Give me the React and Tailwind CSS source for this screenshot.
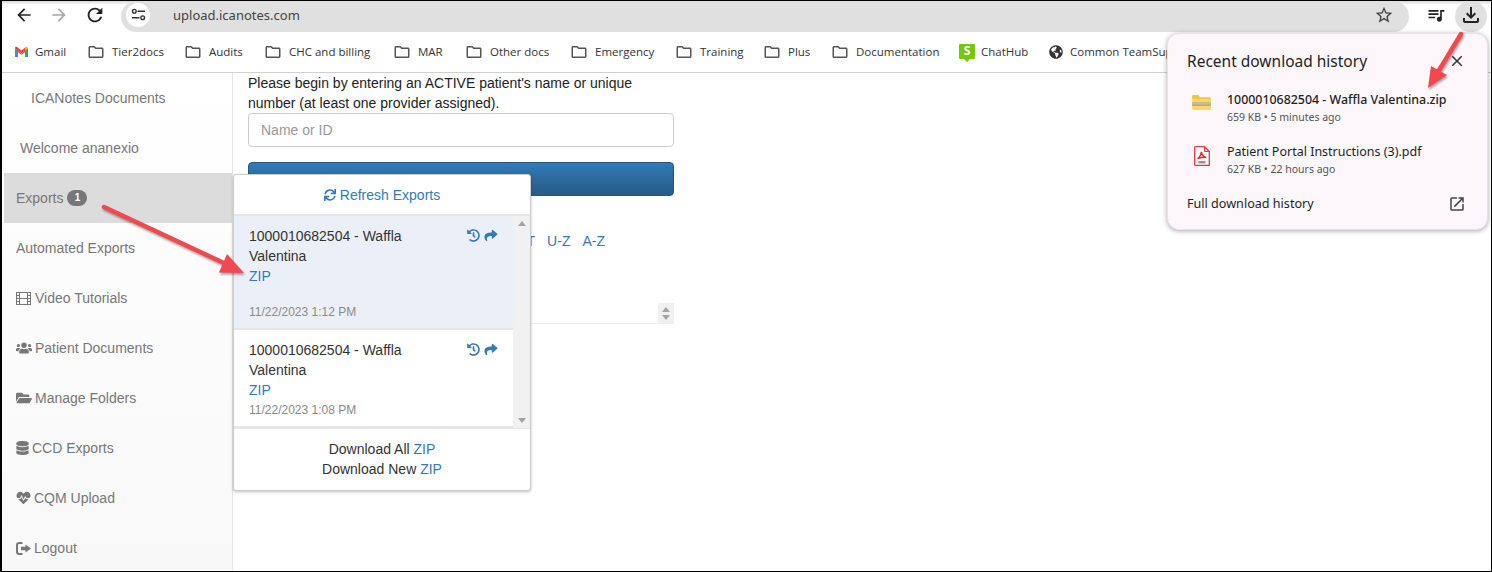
import { FaUsers, FaFolderOpen, FaDatabase, FaHeartbeat, FaHistory, FaShare, FaSync, FaGlobeAmericas } from 'react-icons/fa';
import {
  MdArrowBack,
  MdArrowForward,
  MdRefresh,
  MdStarBorder,
  MdOutlineQueueMusic,
  MdOutlineFileDownload,
  MdOutlineFolder,
  MdClose,
  MdOpenInNew,
} from 'react-icons/md';

const folders = [
  { label: 'Tier2docs', width: 'w-[51px]' },
  { label: 'Audits', width: 'w-[34px]' },
  { label: 'CHC and billing', width: 'w-[83px]' },
  { label: 'MAR', width: 'w-[26px]' },
  { label: 'Other docs', width: 'w-[59px]' },
  { label: 'Emergency', width: 'w-[59px]' },
  { label: 'Training', width: 'w-[42px]' },
  { label: 'Plus', width: 'w-[22px]' },
  { label: 'Documentation', width: 'w-[82px]' },
];

const FilmIcon = ({ className }) => (
  <svg viewBox="0 0 15 13" fill="none" stroke="currentColor" strokeWidth="1" className={className}>
    <rect x=".5" y=".5" width="14" height="12" />
    <path d="M3.500.5v12M11.500.5v12M3.500 6.500h8M.5 3.500h3M.5 6.500h3M.5 9.500h3M11.500 3.500h3M11.500 6.500h3M11.500 9.500h3" />
  </svg>
);

const LogoutIcon = ({ className }) => (
  <svg viewBox="0 0 15 13" fill="currentColor" className={className}>
    <path d="M3 0h3.500v2H3.200C2.500 2 2 2.500 2 3.200v6.600C2 10.500 2.500 11 3.200 11h3.300v2H3c-1.700 0-3-1.300-3-3V3c0-1.700 1.300-3 3-3z" />
    <path d="M9.500 2.500L15 6.500l-5.500 4V8.200H5V4.800h4.500z" />
  </svg>
);

const navItems = [
  { label: 'Automated Exports' },
  { label: 'Video Tutorials', icon: FilmIcon, gap: 'gap-[4px]', size: 'w-[15px] h-[13px]' },
  { label: 'Patient Documents', icon: FaUsers, gap: 'gap-[3px]', size: 'w-[16px] h-[16px]' },
  { label: 'Manage Folders', icon: FaFolderOpen, gap: 'gap-[3px]', size: 'w-[16px] h-[16px]' },
  { label: 'CCD Exports', icon: FaDatabase, gap: 'gap-[3px]', size: 'w-[13px] h-[14px]' },
  { label: 'CQM Upload', icon: FaHeartbeat, gap: 'gap-[3px]', size: 'w-[15px] h-[14px]' },
  { label: 'Logout', icon: LogoutIcon, gap: 'gap-[3px]', size: 'w-[15px] h-[13px]' },
];

const SiteInfoIcon = () => (
  <svg viewBox="0 0 16 14" fill="none" stroke="#333" strokeWidth="1.500" className="w-[15px] h-[13px]">
    <circle cx="3.500" cy="3.500" r="2" />
    <path d="M7 3.500h8M1 10.500h8" />
    <circle cx="12.500" cy="10.500" r="2" />
  </svg>
);

const GmailIcon = () => (
  <svg viewBox="0 0 16 13" className="w-[15px] h-[12px] shrink-0">
    <path d="M1 12V2.500L8 8l7-5.500V12h-3V6.500L8 9.600 4 6.500V12z" fill="#ea4335" />
    <path d="M1 12V2.500L4 5v7z" fill="#4285f4" />
    <path d="M12 12V5l3-2.500V12z" fill="#34a853" />
    <path d="M12 5l3-2.500c0-1.500-1.500-2-2.500-1.200L12 1.700z" fill="#fbbc04" />
    <path d="M4 5L1 2.500C1 1 2.500.5 3.500 1.300L8 4.800l4-3.100V5L8 8z" fill="#ea4335" />
  </svg>
);

const ChatHubIcon = () => (
  <span className="relative flex items-center justify-center w-[16px] h-[15px] shrink-0 rounded-[1px] bg-[#76c80e] text-white text-[12px] leading-none font-bold mb-[2px]">
    S
    <span className="absolute -bottom-[3px] left-[5px] w-0 h-0 border-l-[3px] border-r-[3px] border-t-[3px] border-l-transparent border-r-transparent border-t-[#76c80e]" />
  </span>
);

const ZipIcon = () => (
  <svg viewBox="0 0 20 16" className="w-[19px] h-[15px]">
    <path d="M0 1.500C0 .7.600 0 1.400 0h5l2 2.500h10.200c.8 0 1.400.6 1.400 1.400V5H0z" fill="#f5c13c" />
    <path d="M0 4h20v10.500c0 .8-.6 1.500-1.400 1.500H1.400C.6 16 0 15.300 0 14.500z" fill="#fcd765" />
    <rect x="0" y="8" width="20" height="3.500" fill="#a3a08c" />
    <rect x="0" y="9" width="20" height="1" fill="#d8d4bd" />
  </svg>
);

const PdfIcon = () => (
  <svg viewBox="0 0 16 20" className="w-[16px] h-[20px]">
    <path d="M1.500.7h9l4.800 4.800v13.800H1.500c-.5 0-.8-.3-.8-.8V1.500c0-.5.300-.8.800-.8z" fill="#fff" stroke="#e5383b" strokeWidth="1.300" />
    <path d="M10.500.7v4.800h4.800" fill="none" stroke="#e5383b" strokeWidth="1" />
    <path d="M3.600 12.600c2-1.200 3.400-3.800 3.800-6.800.5 2.800 2.200 5 4.900 5.600-2.800-.2-6 .4-8.700 1.200z" fill="none" stroke="#e02b2f" strokeWidth="1.500" />
    <rect x="4.500" y="15" width="7" height="2.500" fill="#b98a8a" />
  </svg>
);

const ScrollArrow = ({ up }) => (
  <svg viewBox="0 0 8 5" className="w-[8px] h-[5px]">
    <path d={up ? 'M4 0l4 5H0z' : 'M0 0h8L4 5z'} fill="#a3a3a3" />
  </svg>
);

const ExportRow = ({ date, active, tall }) => (
  <div className={`relative pl-[15px] pr-[14px] pt-[10px] border-b-2 border-[#e6e6e6] ${active ? 'bg-[#ebf0f8]' : 'bg-white'} ${tall ? 'h-[114px]' : 'h-[98px]'}`}>
    <div className="flex items-start justify-between">
      <div className="w-[170px] text-[#333]">1000010682504 - Waffla Valentina</div>
      <div className="flex items-center gap-[4px] pt-[3px] pr-[1px] text-[#337ab7]">
        <FaHistory className="w-[13px] h-[13px]" />
        <FaShare className="w-[14px] h-[13px]" />
      </div>
    </div>
    <div className="text-[#337ab7]">ZIP</div>
    <div className={`text-[12px] leading-[18px] text-[#8a8a8a] ${tall ? 'mt-[17px]' : 'mt-[1px]'}`}>{date}</div>
  </div>
);

export default function App() {
  return (
    <div className="relative h-[572px] overflow-hidden border border-black border-l-2 bg-white font-['Liberation_Sans',sans-serif] text-[14px] leading-[20px]">
      {/* browser toolbar */}
      <div className="flex items-center h-[31px] pl-[12px] pr-[4px] bg-white bg-gradient-to-b from-[#d8d8d8] to-white to-[4px]">
        <MdArrowBack className="w-[20px] h-[20px] mb-[4px] text-[#222]" />
        <MdArrowForward className="w-[20px] h-[20px] mb-[4px] ml-[15px] text-[#a8a8a8]" />
        <MdRefresh className="w-[22px] h-[22px] mb-[4px] ml-[15px] text-[#222]" />
        <div className="flex items-center flex-1 h-[31px] ml-[15px] pl-[5px] pr-[15px] pb-[4px] rounded-full bg-[#e0e0e0] font-['Noto_Sans',sans-serif]">
          <div className="flex items-center justify-center w-[24px] h-[24px] rounded-full bg-white">
            <SiteInfoIcon />
          </div>
          <span className="ml-[23px] text-[13px] text-[#444]">upload.icanotes.com</span>
          <MdStarBorder className="ml-auto w-[20px] h-[20px] text-[#444]" />
        </div>
        <MdOutlineQueueMusic className="w-[20px] h-[20px] mb-[4px] ml-[17px] text-[#222]" />
        <div className="flex items-center justify-center w-[32px] h-[31px] ml-[9px] pb-[4px] rounded-full bg-[#e0e0e0]">
          <MdOutlineFileDownload className="w-[24px] h-[24px] text-[#222]" />
        </div>
      </div>

      {/* bookmarks bar */}
      <div className="flex items-center h-[41px] pl-[12px] border-b border-[#d0d0d0] overflow-hidden whitespace-nowrap font-['Open_Sans',sans-serif] text-[11.500px] text-[#333]">
        <GmailIcon />
        <span className="ml-[6px] w-[31px]">Gmail</span>
        {folders.map((folder) => (
          <div key={folder.label} className="flex items-center ml-[21px]">
            <MdOutlineFolder className="w-[18px] h-[18px] text-[#555]" />
            <span className={`ml-[7px] ${folder.width}`}>{folder.label}</span>
          </div>
        ))}
        <div className="flex items-center ml-[21px]">
          <ChatHubIcon />
          <span className="ml-[6px] w-[47px]">ChatHub</span>
        </div>
        <div className="flex items-center ml-[21px]">
          <FaGlobeAmericas className="w-[14px] h-[14px] text-[#333]" />
          <span className="ml-[7px]">Common TeamSupport</span>
        </div>
      </div>

      <div className="flex h-[497px]">
        {/* sidebar */}
        <div className="w-[231px] shrink-0 border-r border-[#e6e6e6] bg-gradient-to-b from-white to-[#f8f8f8] text-[#777]">
          <div className="flex items-center h-[50px] pl-[29px]">ICANotes Documents</div>
          <div className="flex items-center h-[50px] pl-[18px]">Welcome ananexio</div>
          <div className="flex items-center h-[50px] ml-[2px] pl-[12px] gap-[4px] bg-[#dcdcdc]">
            Exports
            <span className="flex items-center justify-center w-[20px] h-[16px] rounded-full bg-[#777] text-white text-[10px] font-bold">1</span>
          </div>
          {navItems.map((item) => (
            <div key={item.label} className={`flex items-center h-[50px] pl-[14px] ${item.gap || ''}`}>
              {item.icon && <item.icon className={`${item.size} shrink-0`} />}
              {item.label}
            </div>
          ))}
        </div>

        {/* main form */}
        <div className="pl-[15px] w-[442px]">
          <p className="w-[426px] text-[#222]">Please begin by entering an ACTIVE patient's name or unique number (at least one provider assigned).</p>
          <input
            placeholder="Name or ID"
            className="block w-[426px] h-[34px] px-[12px] border border-[#ccc] rounded-[4px] bg-white placeholder:text-[#999] outline-none"
          />
          <div className="w-[426px] h-[34px] mt-[15px] border border-[#245580] rounded-[4px] bg-gradient-to-b from-[#337ab7] to-[#265a88]" />
          <div className="flex justify-end gap-[12px] w-[357px] mt-[35px] text-[#337ab7]">
            <span>P-T</span>
            <span>U-Z</span>
            <span>A-Z</span>
          </div>
          <div className="flex justify-end w-[426px] h-[73px] border-b border-[#eee]">
            <div className="flex flex-col items-center justify-center gap-[3px] self-end w-[16px] h-[20px] bg-[#f0f0f0]">
              <ScrollArrow up />
              <ScrollArrow />
            </div>
          </div>
        </div>
      </div>

      {/* exports dropdown */}
      <div className="absolute left-[231px] top-[173px] w-[298px] h-[317px] flex flex-col bg-white border border-[#ccc] rounded-[3px] shadow-[0_1px_3px_rgba(0,0,0,0.25)]">
        <div className="flex items-center justify-center gap-[4px] h-[41px] shrink-0 border-b-2 border-[#e6e6e6] text-[#337ab7]">
          <FaSync className="w-[12px] h-[12px]" />
          Refresh Exports
        </div>
        <div className="flex h-[212px] shrink-0">
          <div className="flex-1 min-w-0">
            <ExportRow date="11/22/2023 1:12 PM" active tall />
            <ExportRow date="11/22/2023 1:08 PM" />
          </div>
          <div className="flex flex-col items-center justify-between w-[17px] py-[5px] bg-[#f1f1f1]">
            <ScrollArrow up />
            <ScrollArrow />
          </div>
        </div>
        <div className="flex-1 pt-[10px] text-center text-[#333] border-t border-[#e6e6e6]">
          <div>Download All <span className="text-[#337ab7]">ZIP</span></div>
          <div>Download New <span className="text-[#337ab7]">ZIP</span></div>
        </div>
      </div>

      {/* chrome downloads popup */}
      <div className="absolute left-[1165px] top-[32px] w-[321px] h-[197px] px-[19px] pt-[16px] rounded-[12px] border border-[#f0dfe8] bg-[#fdf7fb] shadow-[0_1px_5px_rgba(0,0,0,0.35)] font-['Noto_Sans',sans-serif] text-[#1f1f1f]">
        <div className="flex items-center justify-between">
          <span className="text-[15.500px] leading-[22px]">Recent download history</span>
          <MdClose className="w-[18px] h-[18px] mr-[2px] text-[#333]" />
        </div>
        <div className="flex mt-[19px]">
          <div className="flex justify-center w-[40px] pt-[4px] pr-[11px] shrink-0"><ZipIcon /></div>
          <div>
            <div className="text-[12.400px] leading-[18px] font-medium whitespace-nowrap">1000010682504 - Waffla Valentina.zip</div>
            <div className="-mt-[1px] text-[10.500px] leading-[18px] text-[#555]">659 KB • 5 minutes ago</div>
          </div>
        </div>
        <div className="flex mt-[17px]">
          <div className="flex justify-center w-[40px] pt-[3px] pr-[11px] shrink-0"><PdfIcon /></div>
          <div>
            <div className="text-[12.500px] leading-[18px] whitespace-nowrap">Patient Portal Instructions (3).pdf</div>
            <div className="-mt-[1px] text-[10.500px] leading-[18px] text-[#555]">627 KB • 22 hours ago</div>
          </div>
        </div>
        <div className="flex items-center justify-between mt-[17px]">
          <span className="text-[12.600px] leading-[18px]">Full download history</span>
          <MdOpenInNew className="w-[18px] h-[18px] mr-[2px] text-[#444]" />
        </div>
      </div>

      {/* annotation arrows */}
      <svg viewBox="0 0 150 76" className="absolute left-[96px] top-[200px] w-[150px] h-[76px] pointer-events-none drop-shadow-[1px_2px_1px_rgba(0,0,0,0.35)]">
        <path d="M6 6L128 63" stroke="#f04a4f" strokeWidth="4.500" strokeLinecap="round" />
        <path d="M146 72L121 71.500L129 53z" fill="#f04a4f" />
      </svg>
      <svg viewBox="0 0 44 62" className="absolute left-[1424px] top-[29px] w-[44px] h-[62px] pointer-events-none drop-shadow-[1px_2px_1px_rgba(0,0,0,0.35)]">
        <path d="M35 4L12 42" stroke="#f04a4f" strokeWidth="4.500" strokeLinecap="round" />
        <path d="M2 58L5 36L21 45z" fill="#f04a4f" />
      </svg>
    </div>
  );
}
